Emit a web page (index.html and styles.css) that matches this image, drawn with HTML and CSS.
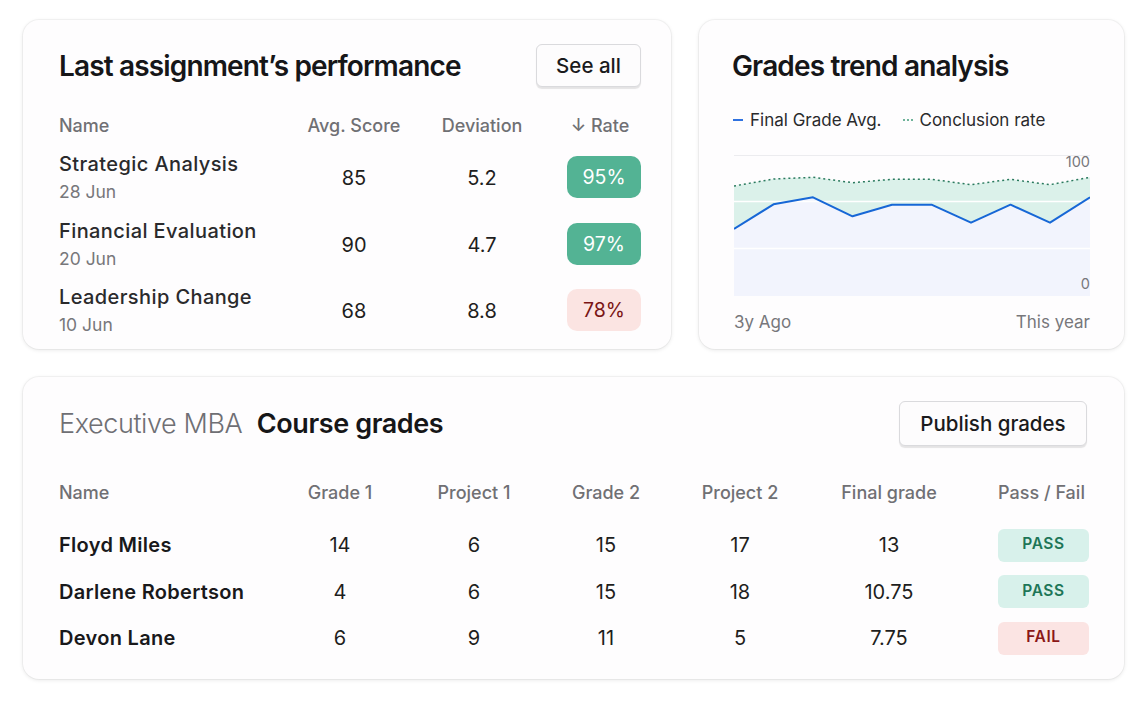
FILE: index.html
```html
<!DOCTYPE html>
<html lang="en">
<head>
<meta charset="utf-8">
<title>Grades dashboard</title>
<link rel="stylesheet" href="styles.css">
</head>
<body>
<main class="page">
  <div class="top-row">
    <section class="card perf">
      <header class="card-head">
        <h2 class="title">Last assignment’s performance</h2>
        <button class="btn btn-sm">See all</button>
      </header>
      <div class="perf-table">
        <div class="th th-name">Name</div>
        <div class="th">Avg. Score</div>
        <div class="th">Deviation</div>
        <div class="th th-rate">↓ Rate</div>

        <div class="name-cell"><div class="pname">Strategic Analysis</div><div class="pdate">28 Jun</div></div>
        <div class="val">85</div>
        <div class="val">5.2</div>
        <div class="rate"><span class="rate-badge good">95%</span></div>

        <div class="name-cell"><div class="pname">Financial Evaluation</div><div class="pdate">20 Jun</div></div>
        <div class="val">90</div>
        <div class="val">4.7</div>
        <div class="rate"><span class="rate-badge good">97%</span></div>

        <div class="name-cell"><div class="pname">Leadership Change</div><div class="pdate">10 Jun</div></div>
        <div class="val">68</div>
        <div class="val">8.8</div>
        <div class="rate"><span class="rate-badge bad">78%</span></div>
      </div>
    </section>

    <section class="card trend">
      <header class="card-head">
        <h2 class="title">Grades trend analysis</h2>
      </header>
      <div class="legend">
        <span class="legend-item"><span class="key key-solid"></span>Final Grade Avg.</span>
        <span class="legend-item"><span class="key key-dot"></span>Conclusion rate</span>
      </div>
      <div class="chart">
        <svg class="chart-svg" viewBox="0 0 356 141" width="356" height="141" preserveAspectRatio="none">
          <line x1="0" y1="0.5" x2="356" y2="0.5" stroke="#ececef" stroke-width="1"/>
          <polygon fill="#dbf1ea" points="0,31 39.5,24 79,22.3 118.5,27.7 158,24.3 197.5,24.3 237,29.7 276.5,24.3 316,29.7 356,22.3 356,141 0,141"/>
          <polygon fill="#f2f4fd" points="0,74 39.5,49.3 79,42.3 118.5,61.3 158,49.7 197.5,49.7 237,67.7 276.5,49.7 316,67.7 356,42.3 356,141 0,141"/>
          <line x1="0" y1="46.5" x2="356" y2="46.5" stroke="#ffffff" stroke-width="1.5"/>
          <line x1="0" y1="93.5" x2="356" y2="93.5" stroke="#ffffff" stroke-width="1.5"/>
          <polyline fill="none" stroke="#2a7a5e" stroke-width="1.5" stroke-dasharray="2 3" points="0,31 39.5,24 79,22.3 118.5,27.7 158,24.3 197.5,24.3 237,29.7 276.5,24.3 316,29.7 356,22.3"/>
          <polyline fill="none" stroke="#1767d6" stroke-width="2" stroke-linejoin="round" points="0,74 39.5,49.3 79,42.3 118.5,61.3 158,49.7 197.5,49.7 237,67.7 276.5,49.7 316,67.7 356,42.3"/>
        </svg>
        <span class="axis-label axis-top">100</span>
        <span class="axis-label axis-bottom">0</span>
      </div>
      <div class="x-axis">
        <span>3y Ago</span>
        <span>This year</span>
      </div>
    </section>
  </div>

  <section class="card grades">
    <header class="card-head">
      <h2 class="title"><span class="title-light">Executive MBA</span> Course grades</h2>
      <button class="btn btn-lg">Publish grades</button>
    </header>
    <div class="grades-table">
      <div class="gh gh-name">Name</div>
      <div class="gh">Grade 1</div>
      <div class="gh">Project 1</div>
      <div class="gh">Grade 2</div>
      <div class="gh">Project 2</div>
      <div class="gh">Final grade</div>
      <div class="gh gh-status">Pass / Fail</div>

      <div class="gname">Floyd Miles</div>
      <div class="gval">14</div>
      <div class="gval">6</div>
      <div class="gval">15</div>
      <div class="gval">17</div>
      <div class="gval">13</div>
      <div class="gstatus"><span class="status pass">PASS</span></div>

      <div class="gname">Darlene Robertson</div>
      <div class="gval">4</div>
      <div class="gval">6</div>
      <div class="gval">15</div>
      <div class="gval">18</div>
      <div class="gval">10.75</div>
      <div class="gstatus"><span class="status pass">PASS</span></div>

      <div class="gname">Devon Lane</div>
      <div class="gval">6</div>
      <div class="gval">9</div>
      <div class="gval">11</div>
      <div class="gval">5</div>
      <div class="gval">7.75</div>
      <div class="gstatus"><span class="status fail">FAIL</span></div>
    </div>
  </section>
</main>
</body>
</html>
```

FILE: styles.css
```css
* {
  box-sizing: border-box;
}

html, body {
  margin: 0;
  padding: 0;
  background: #ffffff;
}

body {
  font-family: Inter, "Noto Sans", "Liberation Sans", sans-serif;
  color: #1c1c1e;
}

.page {
  padding: 20px 23px 26px 23px;
  display: flex;
  flex-direction: column;
  gap: 28px;
}

.top-row {
  display: grid;
  grid-template-columns: 648px 425px;
  grid-template-rows: 329px;
  gap: 28px;
}

.card {
  background: #fefdfe;
  border-radius: 16px;
  box-shadow: 0 1px 4px rgba(0, 0, 0, 0.10), 0 0 0 1px rgba(0, 0, 0, 0.035);
}

.card-head {
  display: flex;
  align-items: center;
  justify-content: space-between;
}

.title {
  margin: 0;
  font-size: 28px;
  font-weight: 600;
  letter-spacing: -0.85px;
  color: #161618;
  white-space: nowrap;
}

.btn {
  font-family: inherit;
  background: #fdfcfd;
  border: 1px solid #dadadd;
  border-radius: 6px;
  box-shadow: 0 1.5px 1px rgba(0, 0, 0, 0.10);
  color: #1a1a1c;
  font-weight: 500;
  font-size: 20.5px;
  padding: 0;
  cursor: pointer;
}

/* ---------- Performance card ---------- */
.perf {
  padding: 24px 30px 0 36px;
}

.perf .card-head {
  height: 43px;
}

.btn-sm {
  width: 105px;
  height: 43px;
}

.perf-table {
  margin-top: 29px;
  display: grid;
  grid-template-columns: 231px 128px 128px 1fr;
  grid-template-rows: 25.5px;
  grid-auto-rows: 56px;
  row-gap: 10.5px;
}

.perf-table .th {
  font-size: 18px;
  font-weight: 500;
  color: #707074;
  line-height: 20px;
  text-align: center;
}

.perf-table .th-name {
  text-align: left;
}

.perf-table .th-rate {
  justify-self: end;
  width: 74px;
  padding-right: 8px;
  white-space: nowrap;
}

.name-cell {
  display: flex;
  flex-direction: column;
}

.pname {
  font-size: 20px;
  font-weight: 500;
  letter-spacing: 0.4px;
  line-height: 24px;
  color: #2a2a2c;
  white-space: nowrap;
}

.pdate {
  font-size: 17.5px;
  line-height: 32px;
  color: #77777b;
}

.val {
  align-self: center;
  text-align: center;
  font-size: 20px;
  color: #1e1e20;
  padding-bottom: 4px;
}

.rate {
  align-self: center;
  justify-self: end;
  padding-bottom: 6px;
}

.rate-badge {
  display: flex;
  align-items: center;
  justify-content: center;
  width: 74px;
  height: 42px;
  border-radius: 10px;
  font-size: 19.5px;
}

.rate-badge.good {
  background: #53b394;
  color: #ffffff;
}

.rate-badge.bad {
  background: #fbe4e2;
  color: #7a1515;
}

/* ---------- Trend card ---------- */
.trend {
  padding: 24px 34px 0 35px;
}

.trend .card-head {
  height: 43px;
}

.trend .title {
  margin-left: -2px;
}

.legend {
  margin-top: 23px;
  display: flex;
  gap: 22px;
  line-height: 20px;
  font-size: 17px;
  color: #2a2a2c;
}

.legend-item {
  display: flex;
  align-items: center;
}

.key {
  display: inline-block;
  width: 10px;
  height: 2px;
  margin-right: 7px;
  margin-left: -1px;
}

.key-solid {
  background: #2f72e0;
}

.key-dot {
  background: repeating-linear-gradient(90deg, #6fb39a 0 2px, transparent 2px 4px);
}

.chart {
  position: relative;
  margin-top: 25px;
  width: 356px;
  height: 141px;
}

.chart-svg {
  display: block;
}

.axis-label {
  position: absolute;
  right: 0;
  font-size: 14.5px;
  color: #77777b;
  line-height: 16px;
}

.axis-top {
  top: -1px;
}

.axis-bottom {
  top: 121px;
}

.x-axis {
  margin-top: 16px;
  width: 356px;
  display: flex;
  justify-content: space-between;
  font-size: 17px;
  line-height: 20px;
  color: #77777b;
}

/* ---------- Grades card ---------- */
.grades {
  height: 302px;
  padding: 24px 35px 0 36px;
}

.grades .card-head {
  height: 45px;
  padding-right: 2px;
}

.grades .title {
  font-size: 27px;
  letter-spacing: -0.4px;
}

.title-light {
  font-weight: 300;
  color: #6f6f74;
  margin-right: 8px;
}

.btn-lg {
  width: 188px;
  height: 45px;
}

.grades-table {
  margin-top: 37px;
  display: grid;
  grid-template-columns: 214px 134px 134px 130px 138px 160px 1fr;
  grid-template-rows: 32.5px;
  grid-auto-rows: 34px;
  row-gap: 12.5px;
}

.gh {
  font-size: 18px;
  font-weight: 500;
  color: #707074;
  line-height: 20px;
  text-align: center;
  white-space: nowrap;
}

.gh-name {
  text-align: left;
}

.gh-status {
  justify-self: end;
  width: 91px;
  padding-right: 4px;
}

.gname {
  align-self: center;
  font-size: 20px;
  font-weight: 600;
  letter-spacing: 0.3px;
  color: #19191b;
  white-space: nowrap;
}

.gval {
  align-self: center;
  text-align: center;
  font-size: 20px;
  color: #1e1e20;
}

.gstatus {
  justify-self: end;
  align-self: center;
}

.status {
  display: flex;
  align-items: center;
  justify-content: center;
  width: 91px;
  height: 33px;
  border-radius: 6px;
  font-size: 15.5px;
  font-weight: 600;
  letter-spacing: 0.6px;
  padding-bottom: 3px;
}

.status.pass {
  background: #d8f1eb;
  color: #1d7657;
}

.status.fail {
  background: #fbe4e3;
  color: #8b1717;
}
```
